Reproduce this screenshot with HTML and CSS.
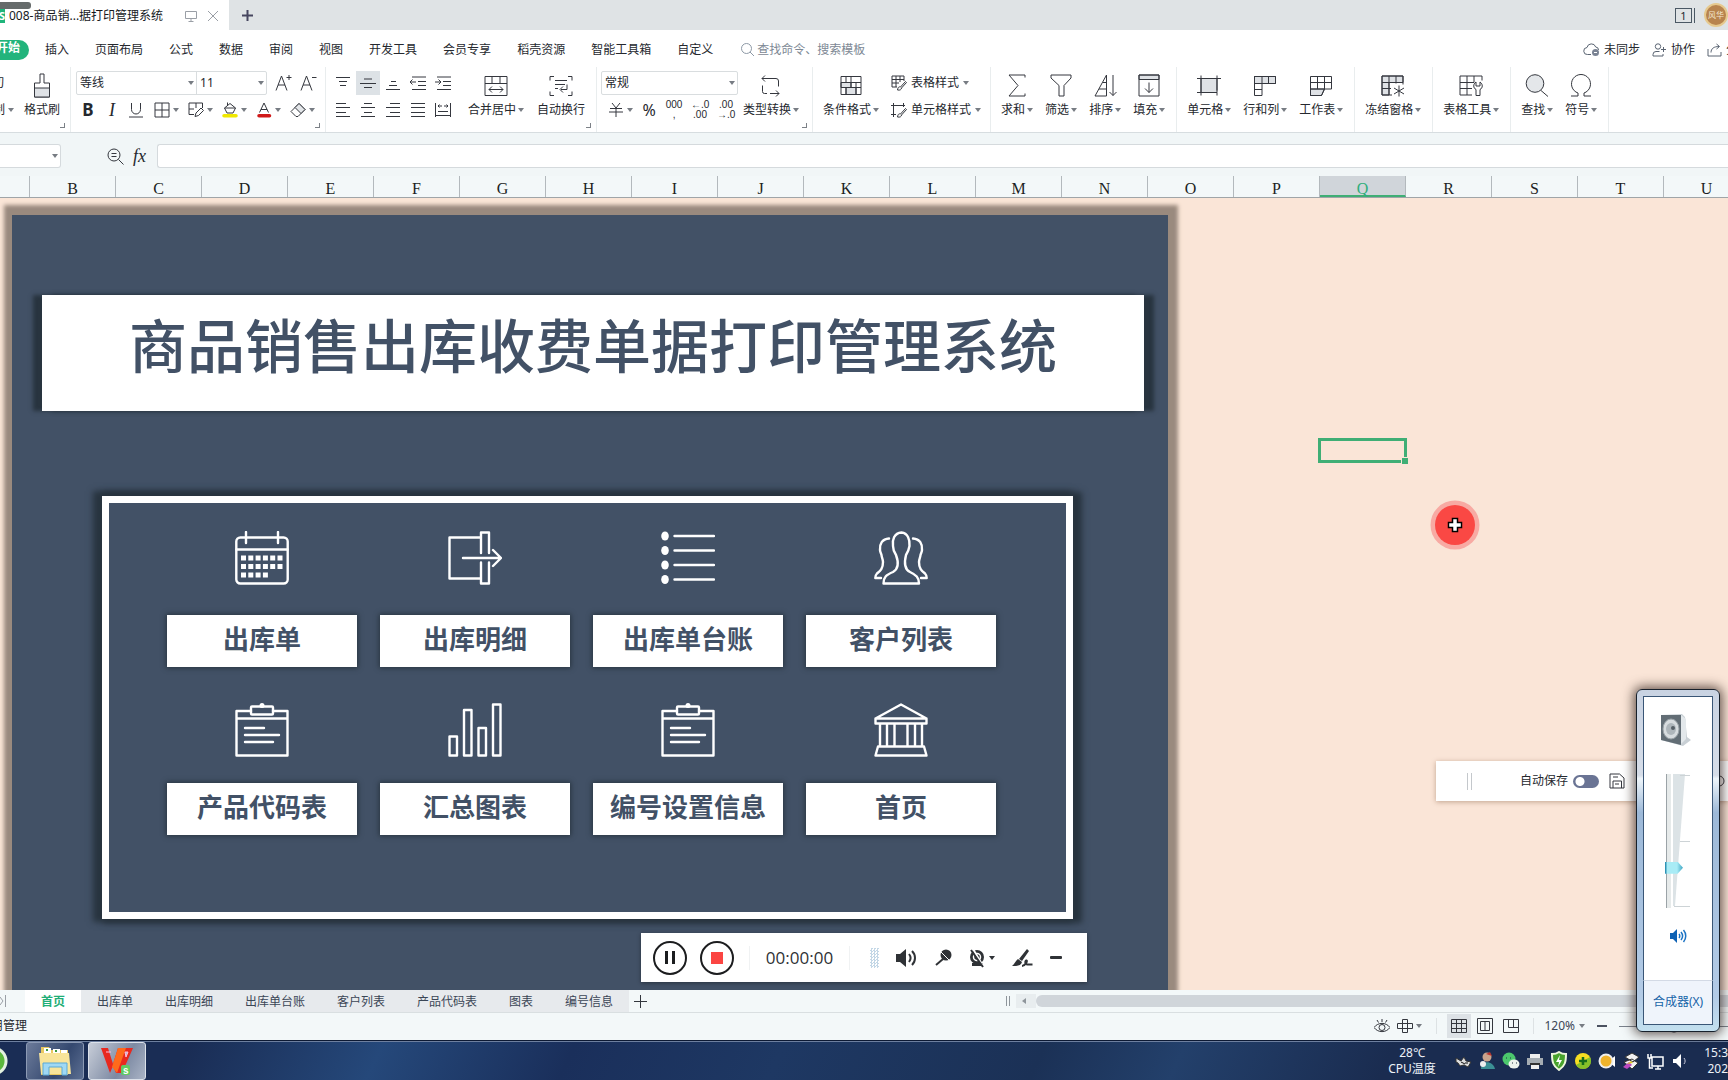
FILE: index.html
```html
<!DOCTYPE html>
<html lang="zh-CN">
<head>
<meta charset="utf-8">
<title>008-商品销售出库收费单据打印管理系统</title>
<link rel="stylesheet" href="styles.css">
</head>
<body>
<header class="tabbar">
  <div class="doc-tab">
    <span class="doc-logo">S</span>
    <span class="doc-title">008-商品销...据打印管理系统</span>
    <svg class="ic faint" width="12" height="12" viewBox="0 0 12 12"><path d="M.5 1.500h11v7h-11zM6 8.500v3M3.500 11.500h5"/></svg>
    <button class="plain" aria-label="关闭"><svg class="ic faint" width="12" height="12" viewBox="0 0 12 12"><path d="M1 1l10 10M11 1L1 11"/></svg></button>
  </div>
  <button class="plain new-tab" aria-label="新建"><svg class="ic" width="13" height="13" viewBox="0 0 13 13" stroke-width="2"><path d="M6.500 1v11M1 6.500h11"/></svg></button>
  <div class="tab-right">
    <span class="win-count">1</span>
    <span class="avatar">风华</span>
  </div>
  <i class="grab"></i>
</header>

<nav class="menu">
  <button class="menu-on">开始</button>
  <button>插入</button><button>页面布局</button><button>公式</button><button>数据</button><button>审阅</button><button>视图</button><button>开发工具</button><button>会员专享</button><button>稻壳资源</button><button>智能工具箱</button><button>自定义</button>
  <label class="search"><svg class="ic" width="15" height="15" viewBox="0 0 15 15"><circle cx="6.500" cy="6.500" r="5"/><path d="M10 10l4 4"/></svg><input type="text" placeholder="查找命令、搜索模板"></label>
  <div class="menu-right">
    <button><svg class="ic" width="17" height="15" viewBox="0 0 17 15"><path d="M8 12.500H4.500a3.500 3.500 0 0 1-.5-7 4.500 4.500 0 0 1 8.700-.5A3 3 0 0 1 15.500 8"/><circle cx="12.500" cy="10.500" r="3.500" fill="#7b8494" stroke="none"/><path d="M11 10.500h3" stroke="#fff"/></svg>未同步</button>
    <button><svg class="ic" width="15" height="14" viewBox="0 0 15 14"><circle cx="6" cy="3.500" r="2.700"/><path d="M7.500 8.500H4a3 3 0 0 0-3 3v1.500h10v-2M9 6.500h5M11.500 4v5"/></svg>协作</button>
    <button class="cut"><svg class="ic" width="15" height="14" viewBox="0 0 15 14"><path d="M1 6v7h13V9M4 9.500c0-4 3-6 8-6M9.500 1L12.500 3.500 9.500 6"/></svg><span>分</span></button>
  </div>
</nav>

<section class="ribbon">
  <div class="group clip">
    <div class="rows clipped"><div class="row"><span>切</span></div><div class="row"><span>制</span><i class="caret"></i></div></div>
    <button class="big"><svg class="ic" width="20" height="25" viewBox="0 0 20 25"><path d="M8 1h4v9h5.500v14h-15V10H8z"/><path d="M2.500 15h15v9h-15z" fill="#dfe2e6"/></svg><span>格式刷</span></button>
    <i class="corner"></i>
  </div>
  <div class="group font-group">
    <div class="rows">
      <div class="row"><div class="combo"><label class="pick pick-font"><select aria-label="字体"><option>等线</option></select><i class="caret"></i></label><label class="pick pick-size"><select aria-label="字号"><option>11</option></select><i class="caret"></i></label></div>
        <button class="fsize"><svg class="ic" width="17" height="18" viewBox="0 0 17 18"><path d="M1 16.500L6.500 2 12 16.500M3 11h7M14 1v5M11.500 3.500h5"/></svg></button>
        <button class="fsize"><svg class="ic" width="17" height="18" viewBox="0 0 17 18"><path d="M1 16.500L6.500 2 12 16.500M3 11h7M12 3.500h4.500"/></svg></button></div>
      <div class="row marks">
        <button class="sq bold">B</button><button class="sq ital">I</button>
        <button class="sq" aria-label="下划线"><svg class="ic" width="16" height="16" viewBox="0 0 16 16"><path d="M3.500 1v6.500a4.500 4.500 0 0 0 9 0V1M1 15h14"/></svg></button>
        <div class="splits">
        <button class="split"><svg class="ic" width="16" height="16" viewBox="0 0 16 16"><path d="M1 1h14v14H1zM8 1v14M1 8h14"/></svg><i class="caret"></i></button>
        <button class="split"><svg class="ic" width="16" height="16" viewBox="0 0 16 16"><path d="M6 12.500H1V1h13.500v5M8 1v5M1 7h5"/><path d="M7 14.500l1-3.500 5-5 2.500 2.500-5 5z"/></svg><i class="caret"></i></button>
        <button class="split"><svg class="ic" width="16" height="16" viewBox="0 0 16 16"><path d="M2.500 6L8 1.500 13.500 6l-2.500 5H5zM5.500 4V.5M2.500 6h11"/><path d="M2 13.800h12" stroke="#f0e800" stroke-width="3.500" stroke-linecap="round"/></svg><i class="caret"></i></button>
        <button class="split"><svg class="ic" width="16" height="16" viewBox="0 0 16 16"><path d="M3.500 10.500L8 1l4.500 9.500M5 7.500h6"/><path d="M3 13.800h10.500" stroke="#d01a1a" stroke-width="3.500" stroke-linecap="round"/></svg><i class="caret"></i></button>
        <button class="split"><svg class="ic" width="16" height="16" viewBox="0 0 16 16"><path d="M1 9.500l8-8 6 6-7 7H6z"/><path d="M5 5.500L9 1.500l6 6-4 4z" fill="#e3e6e9"/></svg><i class="caret"></i></button>
        </div>
      </div>
    </div>
    <i class="corner"></i>
  </div>
  <div class="group align-group">
    <div class="rows">
      <div class="row aligns">
        <button class="sq"><svg class="ic" width="16" height="16" viewBox="0 0 16 16"><path d="M1 2.500h14M4 6.500h8M5 10.500h6"/></svg></button>
        <button class="sq on"><svg class="ic" width="16" height="16" viewBox="0 0 16 16"><path d="M4 4h8M0 8.500h16M4 12.500h8"/></svg></button>
        <button class="sq"><svg class="ic" width="16" height="16" viewBox="0 0 16 16"><path d="M6 6.500h5M4 10.500h8M1 14.500h14"/></svg></button>
        <button class="sq"><svg class="ic" width="16" height="16" viewBox="0 0 16 16"><path d="M2 2h14M8 6.500h8M8 10.500h8M2 14.500h14M0 7h6M2.500 4.500L0 7l2.500 2.500"/></svg></button>
        <button class="sq"><svg class="ic" width="16" height="16" viewBox="0 0 16 16"><path d="M2 2h14M8 6.500h8M8 10.500h8M2 14.500h14M0 7h6M3.500 4.500L6 7 3.500 9.500"/></svg></button>
      </div>
      <div class="row aligns">
        <button class="sq"><svg class="ic" width="16" height="16" viewBox="0 0 16 16"><path d="M1 1.500h10M1 5.500h14M1 10.500h10M1 14.500h14"/></svg></button>
        <button class="sq"><svg class="ic" width="16" height="16" viewBox="0 0 16 16"><path d="M4 1.500h8M1 5.500h14M4 10.500h8M1 14.500h14"/></svg></button>
        <button class="sq"><svg class="ic" width="16" height="16" viewBox="0 0 16 16"><path d="M5 1.500h10M1 5.500h14M5 10.500h10M1 14.500h14"/></svg></button>
        <button class="sq"><svg class="ic" width="16" height="16" viewBox="0 0 16 16"><path d="M1 1.500h14M1 5.500h14M1 10.500h14M1 14.500h14"/></svg></button>
        <button class="sq"><svg class="ic" width="16" height="16" viewBox="0 0 16 16"><path d="M.5 1v14M15.500 1v14M3 4h4M9 4h4M4.500 2.500L3 4l1.500 1.500M11.500 2.500L13 4l-1.500 1.500M3 9.500h10M.5 13.500h15"/></svg></button>
      </div>
    </div>
    <button class="big"><svg class="ic" width="24" height="24" viewBox="0 0 24 24"><path d="M1 3h22v19H1zM1 10h22M8 3v7M16 3v7M5 16h14M8 13l-3 3 3 3M16 13l3 3-3 3"/></svg><span>合并居中<i class="caret"></i></span></button>
    <button class="big"><svg class="ic" width="24" height="24" viewBox="0 0 24 24"><path d="M5 3H1v4M19 3h4v4M5 22H1v-4M19 22h4v-4M6 7h12M6 11h10M6 15h3M18 11v5h-6M14 13l-3 3 3 3"/></svg><span>自动换行</span></button>
    <i class="corner"></i>
  </div>
  <div class="group num-group">
    <div class="rows">
      <div class="row"><label class="pick pick-num"><select aria-label="数字格式"><option>常规</option></select><i class="caret"></i></label></div>
      <div class="row nums">
        <button class="split"><svg class="ic" width="16" height="16" viewBox="0 0 16 16"><path d="M4 1l4 5 4-5M2 6.500h12M1 10h14M8 6v9"/></svg><i class="caret"></i></button>
        <button class="pct">%</button>
        <button class="dig"><span>000</span><span>,</span></button>
        <button class="dig"><span>←.0</span><span>.00</span></button>
        <button class="dig"><span>.00</span><span>→.0</span></button>
      </div>
    </div>
    <button class="big"><svg class="ic" width="22" height="24" viewBox="0 0 22 24"><path d="M7 20H4.500a2 2 0 0 1-2-2v-6M5 2L2 5l3 3M2 5h14a2.500 2.500 0 0 1 2.500 2.500V13M10 20h9M16 17l3 3-3 3"/></svg><span>类型转换<i class="caret"></i></span></button>
    <i class="corner"></i>
  </div>
  <div class="group style-group">
    <button class="big"><svg class="ic" width="22" height="24" viewBox="0 0 22 24"><path d="M1 9h10v5H1zM6 14h10v7H6z" fill="#dfe2e6"/><path d="M1 3h20v18H1zM1 9h20M1 14h20M6 3v6M11 3v11M16 9v12M6 14v7"/></svg><span>条件格式<i class="caret"></i></span></button>
    <div class="rows">
      <button class="row wide"><svg class="ic" width="16" height="16" viewBox="0 0 16 16"><path d="M6 12H1V1h12v5M5 1v11M9 1v6M1 4.500h12M1 8h7"/><path d="M6.500 15c.5-3 1.500-3.500 3-3l5-5.500 1 1-5 5.500c0 1.500-1.500 2.500-4 2z"/></svg>表格样式<i class="caret"></i></button>
      <button class="row wide"><svg class="ic" width="16" height="16" viewBox="0 0 16 16"><path d="M0 3.500h14M2.500 1v14M12.500 1v4M0 12.500h5"/><path d="M6.500 15c.5-3 1.500-3.500 3-3l5-5.500 1 1-5 5.500c0 1.500-1.500 2.500-4 2z"/></svg>单元格样式<i class="caret"></i></button>
    </div>
  </div>
  <div class="group">
    <button class="big"><svg class="ic" width="20" height="24" viewBox="0 0 20 24"><path d="M18 4V1.500H2L11 12 2 22.500h16V20"/></svg><span>求和<i class="caret"></i></span></button>
    <button class="big"><svg class="ic" width="22" height="24" viewBox="0 0 22 24"><path d="M1 1.500h20v3l-7 7.500v10.500H9V12L1 4.500z"/></svg><span>筛选<i class="caret"></i></span></button>
    <button class="big"><svg class="ic" width="24" height="24" viewBox="0 0 24 24"><path d="M2 22.500L13.500 1.500v21zM10 9h3.500M6 15.500h7.500M20 1.500V22M16.500 18.500L20 22l3.500-3.500"/></svg><span>排序<i class="caret"></i></span></button>
    <button class="big"><svg class="ic" width="22" height="24" viewBox="0 0 22 24"><path d="M1 1.500h20v4.500H1z" fill="#dfe2e6"/><path d="M1 1.500h20v21H1zM11 9v10M7 15l4 4 4-4"/></svg><span>填充<i class="caret"></i></span></button>
  </div>
  <div class="group">
    <button class="big"><svg class="ic" width="24" height="24" viewBox="0 0 24 24"><path d="M4 5h16v14H4z" fill="#dfe2e6"/><path d="M0 5h24M0 19h18M4 2v20M20 2v15M20 19v3"/></svg><span>单元格<i class="caret"></i></span></button>
    <button class="big"><svg class="ic" width="24" height="24" viewBox="0 0 24 24"><path d="M1.500 3h21v7h-21z" fill="#dfe2e6"/><path d="M1.500 3h21v7h-21zM1.500 3v19H9V3M15.500 3v7M1.500 16H9"/></svg><span>行和列<i class="caret"></i></span></button>
    <button class="big"><svg class="ic" width="24" height="24" viewBox="0 0 24 24"><path d="M1.500 15.500h14l-3 6.500h-11z" fill="#dfe2e6"/><path d="M1.500 3h21v12.500h-21zM1.500 9h21M8.500 3v12.500M15.500 3v12.500M1.500 15v7h11l3-6.500"/></svg><span>工作表<i class="caret"></i></span></button>
  </div>
  <div class="group">
    <button class="big"><svg class="ic" width="24" height="24" viewBox="0 0 24 24"><path d="M1 2.500h21V9H8v12.500H1z" fill="#dfe2e6"/><path d="M11 21.500H1v-19h21V11M1 9h21M1 15h9M8 2.500v19M15 2.500V10M18 12v11M13 14.500l10 6M23 14.500l-10 6"/></svg><span>冻结窗格<i class="caret"></i></span></button>
  </div>
  <div class="group">
    <button class="big"><svg class="ic" width="24" height="24" viewBox="0 0 24 24"><path d="M13 21.500H1v-19h22V7M1 9h14M1 15h12M8 2.500v19M15 2.500V9"/><path d="M17 8.500c-3 2-3 6 0 7.500v6h4v-6c3-1.500 3-5.500 0-7.500v4h-4z" fill="#fff"/></svg><span>表格工具<i class="caret"></i></span></button>
  </div>
  <div class="group">
    <button class="big"><svg class="ic" width="24" height="24" viewBox="0 0 24 24"><circle cx="10" cy="10" r="8.800" fill="#e4e7ea"/><path d="M16 17l7 6"/></svg><span>查找<i class="caret"></i></span></button>
    <button class="big"><svg class="ic" width="22" height="24" viewBox="0 0 22 24"><path d="M1 22.500h7v-3a9.500 9.500 0 1 1 6 0v3h7"/></svg><span>符号<i class="caret"></i></span></button>
  </div>
</section>

<section class="formula">
  <label class="name-box"><input type="text" aria-label="名称框"><i class="caret"></i></label>
  <svg class="ic" width="17" height="17" viewBox="0 0 17 17"><circle cx="7" cy="7" r="6"/><path d="M11.500 11.500l5 5M4.500 5.500h5M4.500 8.500h5"/></svg>
  <span class="fx">fx</span>
  <input class="formula-input" type="text" aria-label="编辑栏">
</section>

<div class="cols">
  <span class="col0"></span><span>B</span><span>C</span><span>D</span><span>E</span><span>F</span><span>G</span><span>H</span><span>I</span><span>J</span><span>K</span><span>L</span><span>M</span><span>N</span><span>O</span><span>P</span><span class="col-on">Q</span><span>R</span><span>S</span><span>T</span><span>U</span>
</div>

<main class="sheet">
  <div class="board">
    <h1 class="board-title">商品销售出库收费单据打印管理系统</h1>
    <div class="frame">
      <div class="tile"><svg width="54" height="54" viewBox="0 0 54 54"><rect x="1.300" y="6.500" width="51.400" height="46" rx="4"/><path d="M11 1v11M43 1v11M1.500 18.500h51"/><path class="fill" d="M6 24.500h5v5H6zM13.300 24.500h5v5h-5zM20.600 24.500h5v5h-5zM27.900 24.500h5v5h-5zM35.200 24.500h5v5h-5zM42.500 24.500h5v5h-5zM6 33h5v5H6zM13.300 33h5v5h-5zM20.600 33h5v5h-5zM27.900 33h5v5h-5zM35.200 33h5v5h-5zM42.500 33h5v5h-5zM6 41.500h5v5H6zM13.300 41.500h5v5h-5zM20.600 41.500h5v5h-5zM27.900 41.500h5v5h-5z"/></svg><button>出库单</button></div>
      <div class="tile"><svg width="54" height="54" viewBox="0 0 54 54"><path d="M32 6.500H1.500v41H32M33 22V1.500h8V22M33 31.500V52.500h8V31.500M15 27h37.500M45 19l8 8-8 8"/></svg><button>出库明细</button></div>
      <div class="tile"><svg width="54" height="54" viewBox="0 0 54 54"><path d="M13.500 5h39.500M13.500 19.500h39.500M13.500 34h39.500M13.500 48.500h39.500"/><g class="fill"><ellipse cx="4" cy="5" rx="3.800" ry="4.500"/><ellipse cx="4" cy="19.500" rx="3.800" ry="4.500"/><ellipse cx="4" cy="34" rx="3.800" ry="4.500"/><ellipse cx="4" cy="48.500" rx="3.800" ry="4.500"/></g></svg><button>出库单台账</button></div>
      <div class="tile"><svg width="54" height="54" viewBox="0 0 54 54"><path d="M27.500 1.500C20 2 18 9 19 15c0 3 1 6 3 9 3 8 2 14-3 17-7 3-9.500 5-9.500 11.500h35.500C45 46 42 44 36 41c-6-3-6-9-4-17 2-3 3-6 3.500-9 .5-6-1.500-13-8-13.500z"/><path d="M15 7.500C8 8 5.500 13 6 19c0 2 1 3 1.500 5 0 2 1.500 4 1.500 7 0 7-3 9-6 11.500-1.500 1.500-1.700 2.500-1.700 4.500H7M39 7.500c7 .5 9.500 5.500 9 11.500 0 2-1 3-1.500 5 0 2-1.500 4-1.500 7 0 7 3 9 6 11.500 1.500 1.500 1.700 2.500 1.700 4.500H47"/></svg><button>客户列表</button></div>
      <div class="tile"><svg width="54" height="54" viewBox="0 0 54 54"><path d="M16 8H1.500v44.500h51V8H38M1.500 15.500h51M10 25h19M10 32h34M10 39h28"/><rect x="16" y="3.500" width="22" height="8" rx="1"/><circle class="fill" cx="27" cy="2.500" r="2.500"/></svg><button>产品代码表</button></div>
      <div class="tile"><svg width="54" height="54" viewBox="0 0 54 54"><path d="M1.500 33.500H9v19H1.500zM16 7h7.500v45.500H16zM30.500 25H38v27.500h-7.500zM45 1.500h7.500v51H45z"/></svg><button>汇总图表</button></div>
      <div class="tile"><svg width="54" height="54" viewBox="0 0 54 54"><path d="M16 8H1.500v44.500h51V8H38M1.500 15.500h51M10 25h19M10 32h34M10 39h28"/><rect x="16" y="3.500" width="22" height="8" rx="1"/><circle class="fill" cx="27" cy="2.500" r="2.500"/></svg><button>编号设置信息</button></div>
      <div class="tile"><svg width="54" height="54" viewBox="0 0 54 54"><path d="M1.500 15.500L27 1.500l25.500 14v5h-51zM1.500 15.500h51M6 21v22.500M13 21v22.500M20.500 21v22.500M33.500 21v22.500M41 21v22.500M48 21v22.500M4 43.500h46l2.500 9h-51z"/></svg><button>首页</button></div>
    </div>
  </div>
  <div class="cell-on"></div>
  <svg class="pointer" width="50" height="50" viewBox="0 0 50 50"><circle cx="25" cy="25" r="24.500" fill="#f8aaa3"/><circle cx="25" cy="25" r="20" fill="#fa4844"/><path d="M22.500 18.500h5v4h4v5h-4v4h-5v-4h-4v-5h4z" fill="#fff" stroke="#000" stroke-width="1.500"/></svg>
</main>

<nav class="sheets">
  <span class="last-nav"><svg class="ic faint" width="8" height="12" viewBox="0 0 8 12"><path d="M0 2l3 4-3 4M5.500 0v12"/></svg></span>
  <div class="sheet-tabs"><button class="tab-on">首页</button><button>出库单</button><button>出库明细</button><button>出库单台账</button><button>客户列表</button><button>产品代码表</button><button>图表</button><button>编号信息</button></div>
  <button class="plain add-sheet" aria-label="新建工作表"><svg class="ic" width="13" height="13" viewBox="0 0 13 13"><path d="M6.500 0v13M0 6.500h13"/></svg></button>
  <div class="hscroll"><i class="grip"></i><span class="arrow"></span><i class="thumb"></i></div>
</nav>

<footer class="status">
  <span class="status-name">用管理</span>
  <div class="status-right">
    <svg class="ic" width="16" height="16" viewBox="0 0 16 16"><path d="M0 9.500c4-5.500 12-5.500 16 0-4 5.500-12 5.500-16 0zM8 1v3M3 2l1.500 2.500M13 2l-1.500 2.500"/><circle cx="8" cy="9.500" r="3"/></svg>
    <button class="split"><svg class="ic" width="16" height="16" viewBox="0 0 16 16"><path d="M5.500 1.500h5v13h-5zM.5 5.500h15v5H.5z"/></svg><i class="caret"></i></button>
    <i class="vline"></i>
    <div class="views">
      <button class="sq on"><svg class="ic" width="18" height="16" viewBox="0 0 18 16"><path d="M1.500 1.500h15v13h-15zM1.500 5.500h15M1.500 10.500h15M6.500 1.500v13M11.500 1.500v13"/></svg></button>
      <button class="sq"><svg class="ic" width="16" height="16" viewBox="0 0 16 16"><path d="M.5.500h15v15H.5zM3.500 3.500h9v9h-9zM8 3.500v9"/></svg></button>
      <button class="sq"><svg class="ic" width="16" height="16" viewBox="0 0 16 16"><path d="M.5 1.500h15v13H.5zM5.500 1.500v8H15.500M10.500 1.500v8"/></svg></button>
    </div>
    <i class="vline"></i>
    <button class="zoom">120%<i class="caret"></i></button>
    <button class="plain zoom-out" aria-label="缩小"></button>
    <input class="zoom-range" type="range" aria-label="缩放">
  </div>
</footer>

<footer class="taskbar">
  <span class="orb"></span>
  <button class="task"><svg width="34" height="32" viewBox="0 0 34 32"><path d="M3 2h8l2 3h17v25H3z" fill="#e8c860"/><path d="M6 3h7v6H6zM15 4h7v5h-7zM23 5h6v5h-6z" fill="#fff"/><path d="M8 4h2v2H8zM17 5h2v2h-2z" fill="#3c9a3c"/><path d="M1 8h30l2 21H3z" fill="#f8e49a"/><path d="M5 18h24v12h-5v-8H11v8H5z" fill="#9fd8f4" stroke="#5aa9d6"/></svg></button>
  <button class="task lit"><svg width="34" height="32" viewBox="0 0 34 32"><path d="M1 3h7l5 16 5-16h15L22 28h-6l-3-7-3 7z" fill="#e8281e"/><path d="M18 3h8l-9 25-5-6z" fill="#ff6a1c"/><path d="M6 7h5M25 7h3l-2 5z" stroke="#fbd" stroke-width="1" fill="#b6c0d0"/><rect x="21" y="20" width="9" height="10" rx="2" fill="#5fcb62"/><text x="23" y="29" font-size="10" font-weight="700" fill="#fff" font-family="Liberation Sans, sans-serif">s</text></svg></button>
  <div class="temp"><span>28℃</span><span>CPU温度</span></div>
  <div class="tray">
    <svg width="20" height="20" viewBox="0 0 20 20"><path d="M3 7l5 3 3-4 2 4 5 1-3 5-4-2-4 1-2-3-2-1z" fill="#ddd" stroke="#333"/><path d="M12 12h3M8 11l4 2" stroke="#111"/></svg>
    <svg width="20" height="20" viewBox="0 0 20 20"><circle cx="10" cy="6" r="4.500" fill="#caa48c"/><path d="M4 18c0-9 12-9 14 0z" fill="#3b8f94"/><path d="M9 3l4-2 2 4z" fill="#b9352e"/><circle cx="6" cy="13" r="3" fill="#eee"/></svg>
    <svg width="20" height="20" viewBox="0 0 20 20"><circle cx="8" cy="8" r="6.500" fill="#4bc76c"/><ellipse cx="13" cy="13" rx="5.500" ry="4.500" fill="#eef5ee"/><path d="M5 7h1M9 7h1M11 12h1M15 12h1" stroke="#234"/></svg>
    <svg width="20" height="20" viewBox="0 0 20 20"><path d="M5 3h10v4H5zM6 13h8v5H6z" fill="#eee"/><path d="M2 7h16v7H2z" fill="#a5acb2"/><path d="M5 12h10v2H5z" fill="#333"/></svg>
    <svg width="20" height="20" viewBox="0 0 20 20"><path d="M10 1c3 2 5 2 7 2 0 8-1 12-7 16C4 15 3 11 3 3c2 0 4 0 7-2z" fill="#48a32c" stroke="#eef6dd" stroke-width="2"/><path d="M11 4l-4 7h3l-1 5 4-7h-3z" fill="#fff"/></svg>
    <svg width="20" height="20" viewBox="0 0 20 20"><circle cx="10" cy="10" r="8" fill="#f6dd22"/><path d="M3 14a8 8 0 0 0 14-8z" fill="#58b52c" opacity=".7"/><path d="M10 6v8M6 10h8" stroke="#176b1c" stroke-width="2.500"/></svg>
    <svg width="20" height="20" viewBox="0 0 20 20"><path d="M13 9l5-4v11l-5-4z" fill="#fff"/><circle cx="9" cy="10" r="7.500" fill="#eee"/><circle cx="9" cy="10" r="5.500" fill="#efb32c"/></svg>
    <svg width="20" height="20" viewBox="0 0 20 20"><path d="M4 6l7-4 7 4-6 5zM3 11l8-3 6 4-6 6z" fill="#f2f2f2" stroke="#333"/><path d="M2 16l6-5 3 3-5 4z" fill="#bb4ac0"/><path d="M6 13l4-3 2 2z" fill="#e0c327"/></svg>
    <svg width="20" height="20" viewBox="0 0 20 20" fill="none" stroke="#fff" stroke-width="1.500"><path d="M7 6h11v9H7zM10 18h6M13 15v3M3 3v4h3V3M4.500 7v10H8"/></svg>
    <svg width="20" height="20" viewBox="0 0 20 20"><path d="M4 8h3l5-5v14l-5-5H4z" fill="#fff"/><path d="M15 7c1.500 2 1.500 4 0 6" fill="none" stroke="#ccd"/></svg>
  </div>
  <div class="clock"><span>15:3</span><span>202</span></div>
</footer>

<div class="recorder">
  <div class="rec-main">
    <button class="round" aria-label="暂停"><i class="bar"></i><i class="bar"></i></button>
    <button class="round" aria-label="停止"><i class="stop"></i></button>
  </div>
  <time class="rec-time">00:00:00</time>
  <div class="rec-tools">
    <i class="dots"></i>
    <svg width="21" height="20" viewBox="0 0 21 20"><path d="M0 6h4l6-5v18l-6-5H0z"/><path class="ln" d="M13 6c2 2.500 2 5.500 0 8M16 3c4 4 4 10 0 14"/></svg>
    <svg width="18" height="20" viewBox="0 0 18 20"><circle cx="12" cy="7" r="5.500"/><path class="ln" d="M9 11l-7 6" stroke-width="3"/><path d="M7 4l8 8" stroke="#fff"/></svg>
    <button class="split"><svg width="17" height="20" viewBox="0 0 17 20"><circle cx="8" cy="9" r="7"/><path d="M3 15h11v3H3z"/><circle cx="8" cy="9" r="3.500" fill="none" stroke="#fff" stroke-width="1.500"/><path d="M4 1l10 17" stroke="#fff" stroke-width="2"/><path class="ln" d="M2 2l12 17"/></svg><i class="caret dark"></i></button>
    <svg width="21" height="20" viewBox="0 0 21 20"><path d="M15 1l2 2-7 10-3-2zM6 11l4 3c-1 4-5 4-10 4 3-2 3-5 6-7z"/><path class="ln" d="M10 18c3 0 6-5 4.500-5.500s-2 4 1 4h5" stroke-width="1.500"/></svg>
    <i class="dash"></i>
  </div>
</div>

<div class="autosave">
  <i class="grip"></i>
  <label>自动保存<input type="checkbox"></label>
  <svg class="ic" width="16" height="16" viewBox="0 0 16 16"><path d="M1 1h9.500L15 5v10H1zM4 15V8h8.500v7M4 4h5M6 11h4"/></svg>
  <svg class="ic" width="16" height="16" viewBox="0 0 16 16"><path d="M1 7h10M4 4L1 7l3 3"/></svg>
  <svg class="ic tail" width="12" height="12" viewBox="0 0 12 12"><circle cx="5" cy="6" r="5"/></svg>
</div>

<div class="volume">
  <div class="vol-body">
    <svg width="32" height="32" viewBox="0 0 32 32"><path d="M1 1l21-1 3 3 2 20 4 3-8 6L1 26z" fill="#c9d0d5"/><path d="M1 1h20v30L1 26z" fill="#626d75"/><path d="M21 1l5 4v20l-5 5z" fill="#e3e8eb"/><ellipse cx="11" cy="15" rx="8" ry="10" fill="#d7dcdf" stroke="#9aa3a8"/><ellipse cx="11" cy="15" rx="5" ry="6" fill="#aeb6bb"/><circle cx="13" cy="14" r="2" fill="#555f66"/></svg>
    <div class="vol-slide">
      <input type="range" value="28" aria-label="音量">
      <svg width="14" height="134" viewBox="0 0 14 134"><path d="M0 0h12L2 132H0z" fill="#dce3e6"/></svg>
      <i class="tick"></i><i class="tick"></i><i class="tick"></i>
    </div>
    <button class="plain" aria-label="静音"><svg width="17" height="16" viewBox="0 0 17 16"><path d="M0 5h3l4-4v14l-4-4H0z" fill="#0f62b4"/><path d="M9 6c1 1 1 3 0 4M11 4c2 2.500 2 5.500 0 8M13.500 2c3 3.500 3 8.500 0 12" fill="none" stroke="#1c73c4" stroke-width="1.500"/></svg></button>
  </div>
  <a class="mixer" href="#">合成器(X)</a>
</div>
</body>
</html>
```
FILE: styles.css
```css
* { box-sizing: border-box; }
body {
  margin: 0; height: 100vh; display: flex; flex-direction: column; overflow: hidden; position: relative;
  font: 12px/16px "Noto Sans", "Noto Sans CJK SC", sans-serif; color: #25282e; background: #f3f8f9;
}
button { border: 0; padding: 0; background: none; font: inherit; color: inherit; white-space: nowrap; flex: none; }
input, select { font: inherit; color: inherit; }
svg { display: block; flex: none; }
.ic { fill: none; stroke: #34373e; }
.faint { stroke: #9a9fa6; }
.plain { display: flex; align-items: center; justify-content: center; }
.caret { flex: none; border: 3px solid transparent; border-top: 4px solid #777c83; border-bottom: 0; width: 6px; height: 4px; }

/* title tabs */
.tabbar { flex: none; height: 30px; display: flex; background: #dfe3e5; position: relative; overflow: hidden; }
.doc-tab { width: 229px; display: flex; align-items: center; background: #fff; padding: 2px 10px 0 0; color: #16191d; }
.doc-logo { width: 5px; height: 14px; margin-right: 4px; background: #1fb57b; color: #fff; font-size: 11px; line-height: 14px; overflow: hidden; font-weight: 700; display: flex; justify-content: flex-end; }
.doc-title { margin-right: auto; }
.doc-tab .plain { margin-left: 10px; }
.new-tab { width: 36px; }
.new-tab .ic { stroke: #46465f; }
.tab-right { margin-left: auto; display: flex; align-items: center; gap: 9px; }
.win-count { width: 17px; height: 15px; border: 1px solid #4a5864; box-shadow: 2px 0 #dfe3e5, 3px 0 #4a5864; text-align: center; line-height: 13px; font-size: 11px; margin-right: 3px; }
.avatar { width: 24px; height: 24px; border-radius: 50%; background: #b8844e; border: 2px solid #e6c98e; color: #f4e6cf; font-size: 8px; line-height: 20px; text-align: center; }
.grab { position: absolute; left: 0; top: 2px; width: 31px; height: 7px; background: #666b6b; border-radius: 0 3px 3px 0; }

/* menu */
.menu { flex: none; height: 37px; padding-top: 2px; display: flex; align-items: center; gap: 26px; background: #fff; overflow: hidden; }
.menu .menu-on { width: 29px; height: 20px; margin-right: -10px; padding-right: 9px; display: flex; justify-content: flex-end; overflow: hidden; border-radius: 0 10px 10px 0; background: #22b47c; color: #fff; font-weight: 700; }
.search { display: flex; align-items: center; gap: 2px; color: #7d8894; margin-left: 1px; }
.search .ic { stroke: #8d99a6; }
.search input { border: 0; padding: 0; width: 130px; background: none; outline: 0; }
.search input::placeholder { color: #7d8894; opacity: 1; }
.menu-right { margin-left: auto; display: flex; gap: 12px; }
.menu-right button { display: flex; align-items: center; gap: 4px; }
.menu-right .ic { stroke: #5a6472; }
.cut span { width: 2px; overflow: hidden; }

/* ribbon */
.ribbon { flex: none; height: 66px; display: flex; background: #fff; border-bottom: 1px solid #d7dde0; overflow: hidden; }
.group { flex: none; display: flex; gap: 12px; padding: 4px 11px 0 10px; border-right: 1px solid #e9edee; position: relative; }
.rows { display: flex; flex-direction: column; gap: 3px; align-items: flex-start; }
.row { height: 24px; display: flex; align-items: center; }
.big { display: flex; flex-direction: column; align-items: center; }
.big svg { margin-top: 2px; height: 25px; }
.big span { height: 24px; display: flex; align-items: center; gap: 2px; }
.corner { position: absolute; right: 5px; bottom: 4px; width: 5px; height: 5px; border: solid #7c8187; border-width: 0 1px 1px 0; }
.clip { padding-left: 0; padding-right: 10px; gap: 10px; }
.clipped { width: 14px; overflow: hidden; }
.clipped .row { width: 14px; gap: 3px; justify-content: flex-end; white-space: nowrap; }
.clipped .row:first-child { padding-right: 10px; }
.font-group { padding: 4px 8px 0 5px; }
.font-group .row { gap: 8px; }
.combo { display: flex; border: 1px solid #d9dddf; border-radius: 2px; height: 24px; width: 191px; }
.pick { display: flex; align-items: center; padding: 0 2px 0 3px; }
.pick select { appearance: none; border: 0; background: none; padding: 0; outline: 0; flex: 1; min-width: 0; font-size: 12px; }
.pick-font { width: 120px; border-right: 1px solid #d9dddf; }
.pick-size { flex: 1; }
.pick-num { width: 137px; height: 24px; border: 1px solid #d9dddf; border-radius: 2px; }
.sq { width: 24px; height: 24px; display: flex; align-items: center; justify-content: center; }
.on { background: #dde2e6; }
.split { display: flex; align-items: center; gap: 3px; }
.font-group .marks { gap: 0; }
.splits { display: flex; gap: 9px; margin-left: 6px; }
.bold { font-weight: 700; font-size: 17px; }
.ital { font: italic 18px "Liberation Serif", serif; }
.align-group { gap: 13px; padding-left: 5px; }
.aligns { gap: 1px; }
.num-group { gap: 5px; padding-left: 4px; padding-right: 13px; }
.nums { gap: 8px; padding-left: 7px; }
.pct { width: 16px; font-size: 16px; }
.dig { width: 18px; display: flex; flex-direction: column; align-items: center; font: 10px/10px "Liberation Sans", sans-serif; }
.style-group { padding-right: 9px; }
.wide { gap: 4px; }

/* formula bar */
.formula { flex: none; display: flex; align-items: center; padding: 11px 0 8px; background: #f1f6f7; }
.name-box { display: flex; align-items: center; width: 61px; height: 24px; padding-right: 3px; margin-right: 46px; background: #fff; border: 1px solid #d5dadd; border-left: 0; border-radius: 0 3px 3px 0; }
.name-box input { border: 0; background: none; width: 52px; padding: 0; outline: 0; }
.fx { width: 33px; padding-left: 9px; font: italic 18px/20px "Liberation Serif", serif; }
.formula-input { flex: 1; height: 24px; border: 1px solid #d5dadd; border-right: 0; border-radius: 3px 0 0 3px; background: #fff; padding: 0 6px; }

/* column headings */
.cols { flex: none; height: 22px; display: flex; overflow: hidden; border-bottom: 1px solid #9fa5a8; font: 16px/25px "Liberation Serif", serif; color: #1c1f23; background: #f3f8f9; }
.cols span { flex: none; width: 86px; text-align: center; border-right: 1px solid #b3b9bd; }
.cols .col0 { width: 30px; }
.cols .col-on { background: #d0d5da; color: #2fae7c; border-bottom: 2px solid #3fae75; }

/* sheet */
.sheet { flex: 1; min-height: 0; overflow: hidden; position: relative; background: #fae5d7; padding: 17px 0 0 12px; }
.board { width: 1156px; min-height: 100%; background: #425166; padding: 80px 24px 71px 30px; box-shadow: 1px -1px 4px 9px #9a8a7e; }
.board-title { margin: 0; height: 116px; padding-bottom: 20px; display: flex; align-items: center; justify-content: center; background: #fff; color: #425166; font: 500 58px/80px "Noto Sans CJK SC", sans-serif; box-shadow: -9px 0 4px 0 #28343f, 10px 0 4px 0 #28343f; }
.frame { margin: 85px 71px 0 60px; height: 423px; border: 7px solid #fff; padding: 28px 0 0 58px; display: grid; grid-template-columns: repeat(4, 190px); column-gap: 23px; grid-template-rows: 172px 160px; align-content: start; box-shadow: -5px -1px 6px 4px #28343f, 5px 0 6px 4px #28343f; }
.tile { display: flex; flex-direction: column; align-items: center; gap: 30px; }
.tile:nth-child(n+5) { gap: 26px; }
.tile svg { fill: none; stroke: #fff; stroke-width: 2.4; stroke-linecap: round; stroke-linejoin: round; }
.tile .fill { fill: #fff; stroke: none; }
.tile button { width: 190px; height: 52px; padding-bottom: 6px; background: #fff; color: #425166; font: 700 26px/40px "Noto Sans CJK SC", sans-serif; box-shadow: 0 0 5px 1px #28343f; }
.cell-on { position: absolute; left: 1318px; top: 240px; width: 89px; height: 25px; border: 3px solid #3fae75; }
.cell-on::after { content: ""; position: absolute; right: -4px; bottom: -4px; width: 6px; height: 6px; background: #3fae75; border: solid #fae5d7; border-width: 1px 0 0 1px; }
.pointer { position: absolute; left: 1430px; top: 302px; }

/* sheet tabs */
.sheets { flex: none; height: 23px; display: flex; border-bottom: 1px solid #d9dfe1; background: #f3f8f9; }
.last-nav { width: 25px; display: flex; align-items: center; }
.sheet-tabs { display: flex; background: #e7eaed; color: #3b4656; }
.sheet-tabs button { padding: 2px 16px 0; }
.sheet-tabs .tab-on { background: #fff; color: #1fae77; font-weight: 700; }
.add-sheet { width: 22px; }
.hscroll { flex: none; width: 722px; margin-left: auto; display: flex; align-items: center; }
.hscroll .grip { width: 4px; height: 10px; border: solid #8e959b; border-width: 0 1px; margin-right: 6px; }
.arrow { width: 20px; height: 14px; background: #e8edef; display: flex; align-items: center; padding-left: 6px; }
.arrow::before { content: ""; border: 3px solid transparent; border-right: 4px solid #8e959b; border-left: 0; }
.thumb { flex: 1; height: 12px; border-radius: 6px 0 0 6px; background: #d0d5da; }

/* status bar */
.status { flex: none; height: 27px; padding-bottom: 1px; display: flex; align-items: center; background: #f3f8f9; overflow: hidden; }
.status-name { width: 27px; display: flex; justify-content: flex-end; overflow: hidden; white-space: nowrap; }
.status-right { margin-left: auto; display: flex; align-items: center; gap: 7px; }
.vline { width: 1px; height: 16px; background: #dde2e4; margin: 0 3px 0 7px; }
.views { display: flex; gap: 2px; }
.views + .vline { margin-left: 3px; }
.zoom { display: flex; align-items: center; gap: 4px; color: #3b4656; }
.zoom-out { width: 10px; height: 2px; background: #4b5260; margin-left: 5px; }
.zoom-range { appearance: none; width: 109px; height: 16px; margin: 0 0 0 5px; background: linear-gradient(#7a828c, #7a828c) center / 100% 1px no-repeat; }
.zoom-range::-webkit-slider-thumb { appearance: none; width: 8px; height: 14px; border-radius: 4px; background: #fff; border: 1px solid #7a828c; }

/* taskbar */
.taskbar { flex: none; height: 40px; display: flex; align-items: center; color: #eef2f8; border-top: 1px solid #0d1a34; box-shadow: inset 0 1px #6d7f9f; background: linear-gradient(115deg, #1a2d55 0, #1a2d55 11%, #25487a 22%, #1a2f5b 33%, #1e3863 45%, #1b3156 60%, #23406b 68%, #1a2c50 80%); }
.orb { flex: none; width: 8px; height: 28px; margin-right: 18px; background: radial-gradient(circle at -7px 50%, #5bb83c 11px, #e4f2df 12px 14px, transparent 15px); }
.task { width: 58px; height: 38px; margin-right: 4px; display: flex; align-items: center; justify-content: center; border: 1px solid #8c9ab4; border-radius: 3px; background: linear-gradient(120deg, #6c7b9a, #34486f 60%, #5d7093); }
.lit { border-color: #dbe1ea; background: linear-gradient(120deg, #c7cdd8, #7d8aa3 60%, #aab4c6); }
.temp { margin-left: auto; width: 50px; margin-right: 16px; text-align: center; display: flex; flex-direction: column; }
.tray { display: flex; gap: 4px; }
.clock { width: 24px; margin-left: 15px; display: flex; flex-direction: column; align-items: flex-end; white-space: nowrap; }

/* floating screen recorder */
.recorder { position: absolute; left: 641px; bottom: 98px; height: 49px; display: flex; align-items: center; background: #fff; color: #2f3236; padding-right: 25px; box-shadow: 0 1px 4px rgba(0, 0, 0, .4); }
.rec-main { display: flex; gap: 13px; padding: 0 15px 0 12px; }
.round { width: 34px; height: 34px; border: 2px solid #1c1d1f; border-radius: 50%; display: flex; align-items: center; justify-content: center; gap: 4px; }
.bar { width: 3px; height: 13px; background: #1c1d1f; }
.stop { width: 12px; height: 12px; background: #fb4542; }
.rec-time { width: 101px; text-align: center; font: 17px/24px "Open Sans", sans-serif; border: solid #f0f2f3; border-width: 0 1px; }
.rec-tools { display: flex; align-items: center; gap: 17px; padding-left: 20px; }
.rec-tools svg { fill: #2f3236; }
.rec-tools .ln { fill: none; stroke: #2f3236; stroke-width: 2; }
.dots { width: 9px; height: 20px; background: repeating-conic-gradient(#c3d7e6 0 25%, #fff 0 50%) 0 0 / 3px 3px; }
.dark { border-top-color: #2f3236; }
.dash { width: 12px; height: 3px; background: #2f3236; border-radius: 1px; }

/* floating autosave bar */
.autosave { position: absolute; right: 0; bottom: 279px; width: 292px; height: 40px; display: flex; align-items: center; gap: 10px; padding-left: 31px; background: #fff; box-shadow: 0 1px 5px rgba(90, 40, 10, .35); overflow: hidden; }
.autosave .grip { width: 5px; height: 17px; border: solid #c4c8cc; border-width: 0 1px; margin-right: 38px; }
.autosave label { display: flex; align-items: center; gap: 5px; }
.autosave input { appearance: none; margin: 0; width: 26px; height: 13px; border-radius: 7px; background: radial-gradient(circle at 7px 50%, #fff 4px, #6a7494 5px); }
.tail { margin-left: auto; margin-right: 2px; }

/* volume pop-up */
.volume { position: absolute; right: 8px; bottom: 48px; width: 84px; height: 343px; padding: 6px; border: 1px solid #17202b; border-radius: 6px; background: linear-gradient(#c9d3e2, #d6dde8 25%, #eef5fa 26%, #9db9d8 36%, #b3cbe6 90%, #c3e0ef); box-shadow: 0 0 12px 2px rgba(40, 25, 20, .75); display: flex; flex-direction: column; }
.vol-body { flex: 1; border: 1px solid #3a5676; border-bottom: 0; background: #fff; display: flex; flex-direction: column; align-items: center; padding: 17px 4px 0 0; }
.vol-slide { position: relative; display: flex; width: 30px; height: 134px; margin: 28px 0 20px; padding-left: 4px; }
.vol-slide input { appearance: none; writing-mode: vertical-lr; direction: rtl; width: 18px; height: 134px; margin: 0 -10px 0 0; z-index: 1; background: linear-gradient(90deg, transparent 1px, #9ba3a7 1px 2px, #e6eaea 2px 6px, transparent 6px); }
.vol-slide input::-webkit-slider-thumb { appearance: none; width: 18px; height: 12px; background: linear-gradient(90deg, #2f93b5 1px, #a9ecf6 2px 12px, #3fa6c4); clip-path: polygon(0 0, 70% 0, 100% 50%, 70% 100%, 0 100%); }
.tick { position: absolute; right: 1px; top: 1px; width: 10px; height: 1px; background: #cdd3d6; }
.tick:nth-of-type(2) { top: 67px; }
.tick:nth-of-type(3) { top: 132px; width: 16px; }
.vol-body .plain { margin-left: 4px; }
.mixer { height: 45px; border: 1px solid #3a5676; border-top-color: #d3dae5; background: #eff4fb; color: #1663a8; text-align: center; line-height: 42px; text-decoration: none; }
```
